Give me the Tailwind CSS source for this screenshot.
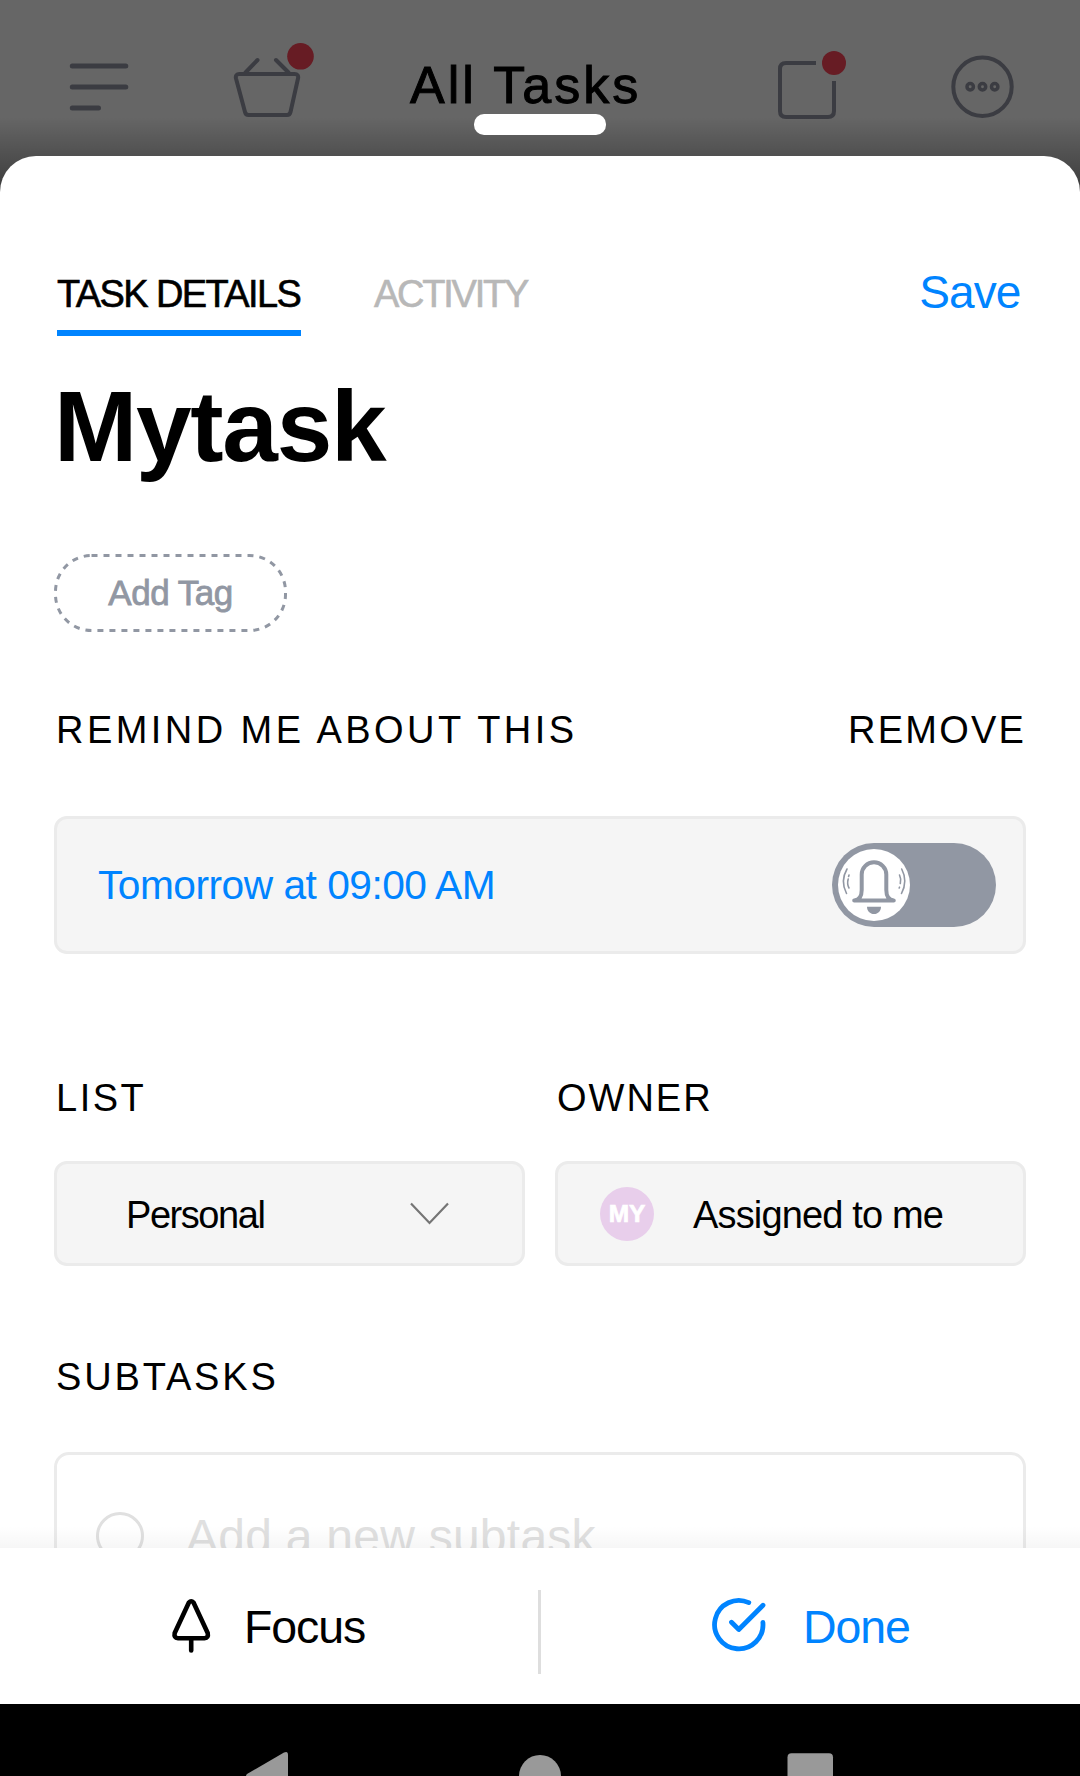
<!DOCTYPE html>
<html lang="en">
<head>
<meta charset="utf-8">
<title>Task details</title>
<script src="https://cdn.jsdelivr.net/npm/@tailwindcss/browser@4"></script>
</head>
<body class="bg-black">
<div class="relative w-[1080px] h-[1776px] overflow-hidden flex flex-col bg-[#666666] text-black font-['Liberation_Sans',Arial,sans-serif] whitespace-nowrap">

  <!-- Dimmed app header behind the sheet -->
  <header class="h-[156px] shrink-0 flex items-start">
    <svg class="ml-[69px] mt-[60px] w-[60px] h-[54px]" viewBox="69 60 60 54" fill="none" stroke="#3b3c42" stroke-width="5" stroke-linecap="round">
      <path d="M72.3 66H125.8M72.3 87H125.8M72.3 108H98.500"/>
    </svg>
    <svg class="ml-[101px] mt-[40px] w-[90px] h-[82px]" viewBox="230 40 90 82" fill="none" stroke="#3b3c42" stroke-width="4" stroke-linecap="round" stroke-linejoin="round">
      <path d="M239.5 74H294.5Q299 74 298 78.500L290.500 112Q289.800 115 287 115H248.500Q245.700 115 245 112L236 78.500Q235 74 239.500 74ZM245.500 72.500L257.500 60M276 60L288.500 72.500"/>
      <circle cx="300.500" cy="56.300" r="13.300" fill="#671c24" stroke="none"/>
    </svg>
    <h1 class="ml-[90px] mt-[55px] w-[240px] text-[52px] leading-[60px] tracking-[3px] [-webkit-text-stroke:1px_black]">All Tasks</h1>
    <svg class="ml-[125px] mt-[45px] w-[80px] h-[80px]" viewBox="775 45 80 80" fill="none" stroke="#3b3c42" stroke-width="4">
      <path d="M816 63H786Q780 63 780 69V111Q780 117 786 117H828Q834 117 834 111V81"/>
      <circle cx="834" cy="63" r="12" fill="#671c24" stroke="none"/>
    </svg>
    <svg class="ml-[95px] mt-[54px] w-[66px] h-[66px]" viewBox="950 54 66 66" fill="none" stroke="#3b3c42" stroke-width="4">
      <circle cx="982.500" cy="86.800" r="29.200"/>
      <circle cx="970.200" cy="86.800" r="3.200" stroke-width="3.500"/>
      <circle cx="982.500" cy="86.800" r="3.200" stroke-width="3.500"/>
      <circle cx="994.700" cy="86.800" r="3.200" stroke-width="3.500"/>
    </svg>
  </header>
  <div class="absolute left-0 top-[117px] w-full h-[80px] bg-linear-to-b from-transparent to-black/45"></div>
  <div class="absolute left-[474px] top-[114px] w-[132px] h-[21px] rounded-[10px] bg-white"></div>

  <!-- Sheet -->
  <main class="relative h-[1392px] shrink-0 overflow-hidden rounded-t-[36px] bg-white px-[54px] pt-[102px] flex flex-col">
    <div class="flex items-start shrink-0">
      <div class="ml-[3px] w-[244px] h-[78px] border-b-6 border-[#0084ff] text-[38px] leading-[73px] tracking-[-1.600px] [-webkit-text-stroke:0.6px_black]">TASK DETAILS</div>
      <div class="ml-[73px] h-[78px] text-[38px] leading-[73px] tracking-[-2.25px] text-[#b8b8b8] [-webkit-text-stroke:0.6px_#b8b8b8]">ACTIVITY</div>
      <div class="ml-auto mr-[5.500px] text-[46px] leading-[69px] tracking-[-0.9px] text-[#0084ff]">Save</div>
    </div>
    <h2 class="mt-[30px] shrink-0 text-[100px] leading-[120px] font-bold tracking-[-1.3px]">Mytask</h2>

    <div class="relative mt-[68px] shrink-0 w-[233px] h-[78px] text-center text-[35px] leading-[78px] tracking-[-0.500px] text-[#9197a3] [-webkit-text-stroke:0.8px_#9197a3]">
      <svg class="absolute inset-0 w-[233px] h-[78px]" fill="none" stroke="#9197a3" stroke-width="3">
        <rect x="1.500" y="1.500" width="230" height="75" rx="36" stroke-dasharray="6 6"/>
      </svg>
      Add Tag
    </div>

    <div class="mt-[78px] shrink-0 flex justify-between text-[38px] leading-[40px]">
      <span class="ml-[2px] tracking-[3.450px]">REMIND ME ABOUT THIS</span>
      <span class="tracking-[2.200px]">REMOVE</span>
    </div>
    <div class="mt-[66px] h-[138px] shrink-0 flex items-center justify-between rounded-[13px] border-3 border-[#ebebeb] bg-[#f5f5f5] pl-[41px] pr-[27px]">
      <span class="pt-[2px] text-[40.700px] tracking-[-0.500px] text-[#0084ff]">Tomorrow at 09:00 AM</span>
      <svg class="w-[164px] h-[84px]" viewBox="52 43 164 84" fill="none" stroke="#9197a3" stroke-linecap="round" stroke-linejoin="round">
        <rect x="52" y="43" width="164" height="84" rx="42" fill="#9197a3" stroke="none"/>
        <circle cx="94" cy="85" r="36" fill="#fff" stroke="none"/>
        <path stroke-width="4" d="M74.200 100.500C80 100 81.700 95 81.700 90V74.500A12.300 12.300 0 0 1 106.300 74.500V90C106.300 95 108 100 113.800 100.500Z"/>
        <path fill="#9197a3" stroke="none" d="M87 106.700H101C101 111 98 114 94 114S87 111 87 106.700Z"/>
        <path stroke-width="1.600" d="M67 69Q60 81 66.500 93.500M69 75L68.600 76.500M68.200 79Q66.800 84 69 88M121.700 69Q128 81 121.500 93.500M119.500 75Q121.500 79 120.300 83.500M119.500 87.200L119.200 88"/>
      </svg>
    </div>

    <div class="mt-[124px] shrink-0 grid grid-cols-2 gap-x-[30px] gap-y-[43px] text-[38px] leading-[40px]">
      <span class="ml-[2px] tracking-[2.500px]">LIST</span>
      <span class="ml-[2px] tracking-[2px]">OWNER</span>
      <div class="h-[105px] flex items-center justify-between rounded-[13px] border-3 border-[#ebebeb] bg-[#f5f5f5] pl-[69px] pr-[72px]">
        <span class="pt-[2px] tracking-[-1.450px]">Personal</span>
        <svg class="w-[40px] h-[24px]" viewBox="0 0 40 24" fill="none" stroke="#757575" stroke-width="2.200"><path d="M1 1.500L19.500 21L38 1.500"/></svg>
      </div>
      <div class="h-[105px] flex items-center rounded-[13px] border-3 border-[#ebebeb] bg-[#f5f5f5] pl-[42px]">
        <span class="size-[54px] rounded-full bg-[#e8ceeb] text-white text-center font-bold text-[24.500px] leading-[54px] [-webkit-text-stroke:0.7px_white]">MY</span>
        <span class="ml-[39px] pt-[2px] tracking-[-0.850px]">Assigned to me</span>
      </div>
    </div>

    <div class="mt-[91px] shrink-0 ml-[2px] text-[38px] leading-[40px] tracking-[2.850px]">SUBTASKS</div>
    <div class="mt-[55px] h-[168px] shrink-0 flex items-start rounded-[15px] border-3 border-[#ebebeb] pl-[39px] pt-[57px]">
      <span class="size-[48px] rounded-full border-3 border-[#e0e0e0]"></span>
      <span class="ml-[42px] text-[48px] leading-[49px] tracking-[0.250px] text-[#e0e0e0]">Add a new subtask</span>
    </div>
    <div class="absolute left-0 bottom-0 w-full h-[22px] bg-linear-to-b from-transparent to-black/[0.035]"></div>
  </main>

  <!-- Action bar -->
  <footer class="relative h-[156px] shrink-0 flex items-start bg-white">
    <div class="w-[538px] flex items-start">
      <svg class="ml-[170px] mt-[49px] w-[43px] h-[60px]" viewBox="170 1597 43 60" fill="none" stroke="#000" stroke-width="4.600" stroke-linecap="round" stroke-linejoin="round">
        <path d="M188.900 1602.500Q191.200 1600 193.500 1602.500L207.700 1633Q208.700 1638 204.500 1638.200H178Q173.700 1638 174.700 1633ZM191.200 1639V1650.500"/>
      </svg>
      <span class="ml-[31px] mt-[49px] text-[46.500px] leading-[60px] tracking-[-1.100px]">Focus</span>
    </div>
    <div class="mt-[42px] w-[3px] h-[84px] bg-[#dedede]"></div>
    <div class="flex items-start text-[#0084ff]">
      <svg class="ml-[169px] mt-[47px] w-[60px] h-[60px]" viewBox="710 1595 60 60" fill="none" stroke="currentColor" stroke-width="4.800" stroke-linecap="round" stroke-linejoin="round">
        <path d="M748.800 1602.600A24.200 24.200 0 1 0 762.900 1622.500M731.500 1622.300L738.800 1629.500L763 1605.300"/>
      </svg>
      <span class="ml-[33px] mt-[49px] text-[46.500px] leading-[60px] tracking-[-1.100px]">Done</span>
    </div>
  </footer>

  <!-- System navigation -->
  <nav class="h-[72px] shrink-0 bg-black">
    <svg class="w-[1080px] h-[72px]" viewBox="0 1704 1080 72" fill="#999999">
      <path d="M284 1752.500Q288 1750.500 288 1755V1797Q288 1801 284 1799L247 1778Q245 1776 247 1774Z"/>
      <circle cx="540" cy="1776" r="21"/>
      <rect x="787.500" y="1753.300" width="45.500" height="46" rx="4"/>
    </svg>
  </nav>
</div>
</body>
</html>
